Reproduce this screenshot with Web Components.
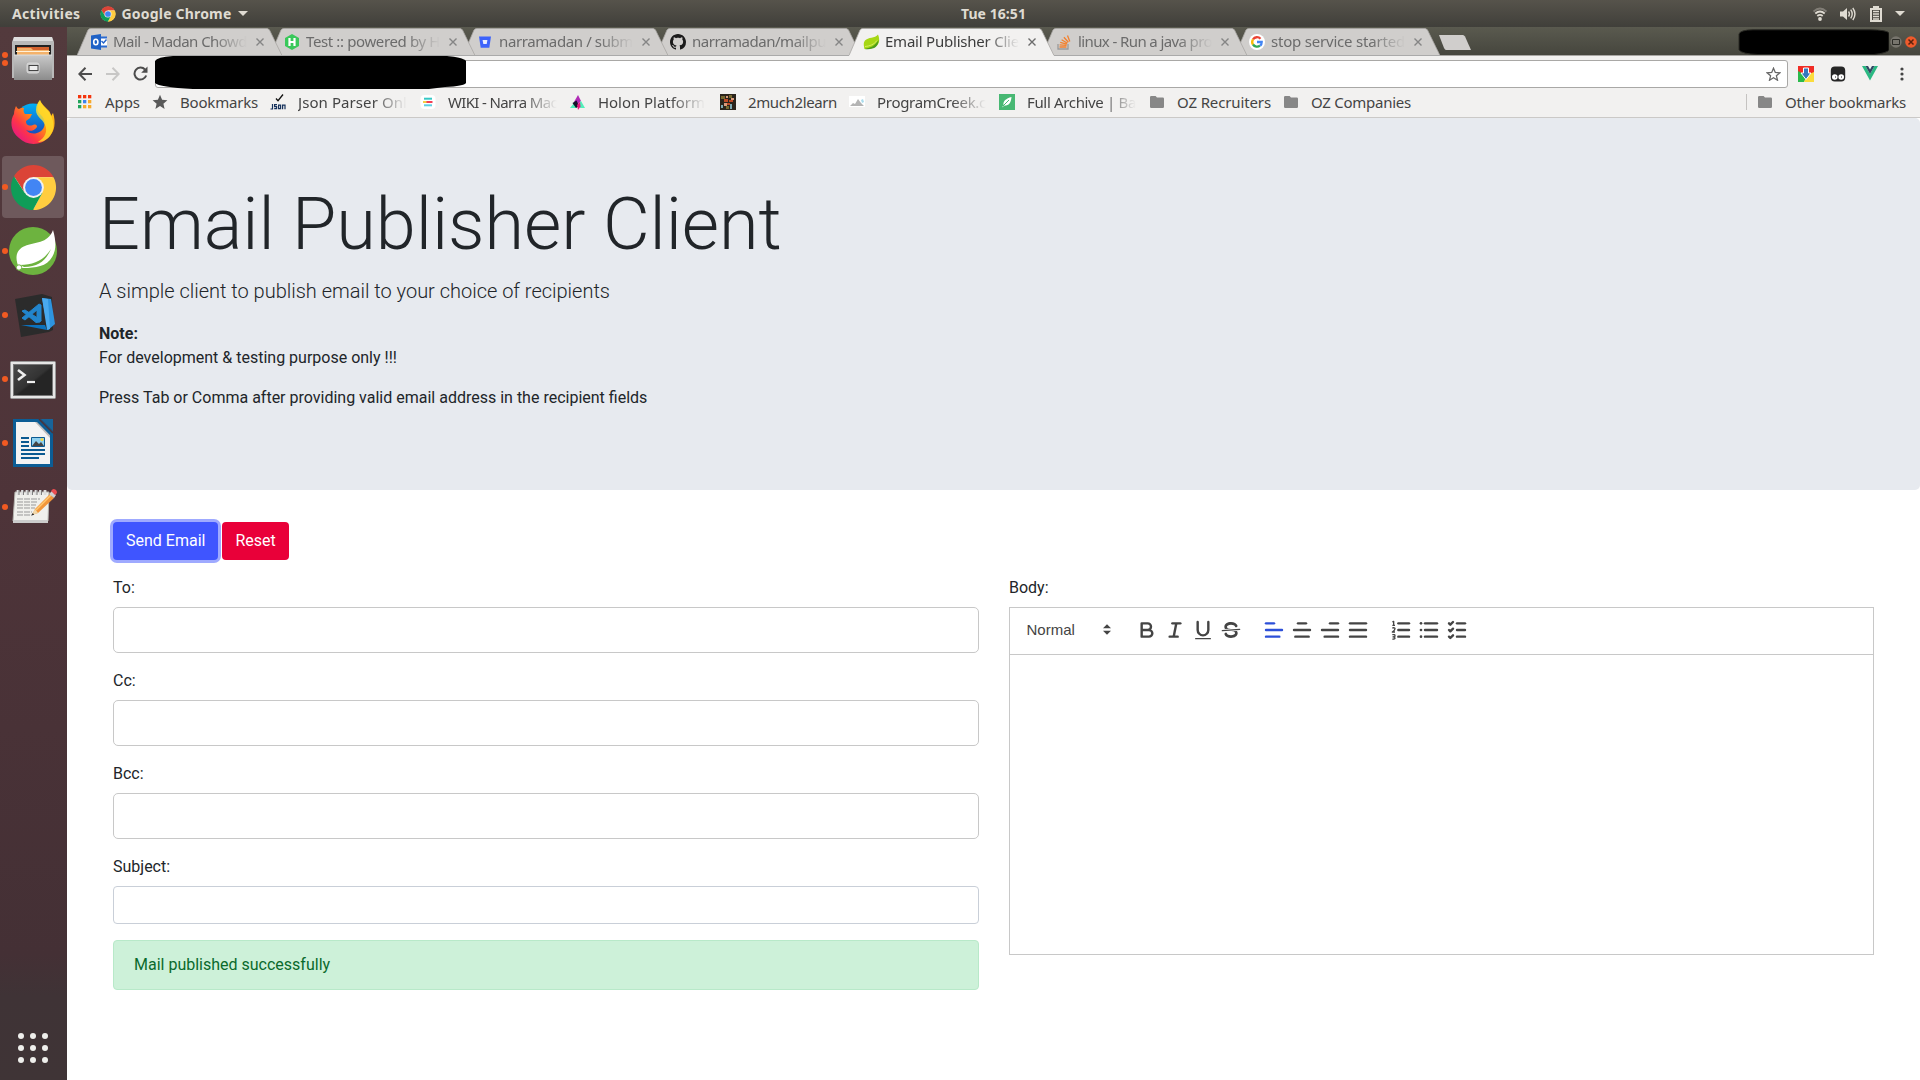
<!DOCTYPE html>
<html lang="en"><head><meta charset="utf-8"><title>Email Publisher Client</title>
<style>
html,body{margin:0;height:100%;overflow:hidden;background:#fff}
body{font-family:Roboto,"Noto Sans",sans-serif;font-size:16px;line-height:24px;color:#212529}
</style></head><body>
<desk-top></desk-top>
<script>
const def=(name,css,html,after)=>customElements.define(name,class extends HTMLElement{
  connectedCallback(){
    if(this.shadowRoot)return;
    const r=this.attachShadow({mode:'open'});
    r.innerHTML='<style>*{box-sizing:border-box}'+css+'</style>'+(typeof html==='function'?html(this):html);
    if(after)after(this,r);
  }
});
const svg=(w,h,vb,body)=>`<svg width="${w}" height="${h}" viewBox="${vb}" xmlns="http://www.w3.org/2000/svg" style="display:block;flex:none">${body}</svg>`;
const chrome=s=>svg(s,s,'-24 -24 48 48',`<circle r="22" fill="#fff"/><path d="M-19.9-11.5A23 23 0 0 1 19.9-11.5L20.500-10.500H0L-9.1 5.2Z" fill="#db4437"/><path d="M20.5-10.5A23 23 0 0 1-.5 23L9.1 5.2 0-10.5Z" fill="#ffcd40"/><path d="M-19.9-11.5-9.1 5.3 9.1 5.3-.5 23A23 23 0 0 1-19.9-11.5Z" fill="#0f9d58"/><circle r="10.6" fill="#f1f1f1"/><circle r="8.6" fill="#4285f4"/>`);
const fav={
outlook:svg(17,16,'0 0 17 16','<path d="M9 2.5h7v11H9z" fill="#2a6ad0"/><path d="M10 4.5h6v7h-6z" fill="#fff"/><path d="m10.5 7 2 2 3-3.5" stroke="#2262c8" fill="none" stroke-width="1.4"/><path d="M0 1.5 10 0v16L0 14.5z" fill="#1f62c6"/><ellipse cx="4.8" cy="8" rx="2.1" ry="2.8" fill="none" stroke="#fff" stroke-width="1.6"/>'),
hacker:svg(16,16,'0 0 16 16','<path d="M8 0 15 4v8l-7 4-7-4V4z" fill="#39c85a"/><path d="M5.500 4v8M10.500 4v8M5.500 8h5" stroke="#fff" stroke-width="2.200"/>'),
bucket:svg(16,16,'0 0 16 16','<path d="M2 2.5h12l-1.7 11.2H3.7z" fill="#3d63fb"/><path d="M5.6 6h4.8l-.7 4H6.3z" fill="#e9ecff"/>'),
github:svg(16,16,'0 0 16 16','<path fill="#1b1b1b" fill-rule="evenodd" d="M8 0C3.58 0 0 3.58 0 8c0 3.54 2.29 6.53 5.47 7.59.4.07.55-.17.55-.38 0-.19-.01-.82-.01-1.49-2.01.37-2.53-.49-2.69-.94-.09-.23-.48-.94-.82-1.13-.28-.15-.68-.52-.01-.53.63-.01 1.08.58 1.23.82.72 1.21 1.87.87 2.33.66.07-.52.28-.87.51-1.07-1.78-.2-3.64-.89-3.64-3.95 0-.87.31-1.59.82-2.15-.08-.2-.36-1.02.08-2.12 0 0 .67-.21 2.2.82.64-.18 1.32-.27 2-.27s1.36.09 2 .27c1.53-1.04 2.2-.82 2.2-.82.44 1.1.16 1.92.08 2.12.51.56.82 1.27.82 2.15 0 3.07-1.87 3.75-3.65 3.95.29.25.54.73.54 1.48 0 1.07-.01 1.93-.01 2.2 0 .21.15.46.55.38A8.01 8.01 0 0 0 16 8c0-4.42-3.58-8-8-8"/>'),
leaf:svg(17,16,'0 0 17 16','<path d="M15 .5c2 5 1.500 9-1.500 11.500-3 2.500-7 3-12 3C1 12 0 9 2 6.500 5 3 12 4.500 15 .5z" fill="#a6d714"/><path d="M1.500 15C7 14 12 12 15.500 6c0 7-5 10-14 9z" fill="#4e9d1b"/><path d="M2 12.500c5-.5 9-2 12-6" stroke="#d4ee62" fill="none"/>'),
stack:svg(16,16,'0 0 16 16','<path d="M2 10v5h10v-5" fill="none" stroke="#9a9a9a" stroke-width="1.300"/><path d="M3.500 13h7M3.600 10.800l7 .6M4.200 8.300l6.600 1.800M5.600 5.700l5.800 3.500M7.900 3.200l4.500 5M11.500 1.500l2.300 6" stroke="#f4802d" stroke-width="1.300"/>'),
google:svg(16,16,'0 0 16 16','<circle cx="8" cy="8" r="8" fill="#fff"/><g fill="none" stroke-width="2.300"><path d="M4 5.400A4.800 4.800 0 0 1 11.500 4.700" stroke="#ea4335"/><path d="M4 5.300a5 5 0 0 0 0 5.400" stroke="#fbbc05"/><path d="M4 10.500a4.800 4.800 0 0 0 7 1.100" stroke="#34a853"/><path d="M8 8h4.700c0 1.500-.5 2.800-1.500 3.800" stroke="#4285f4"/></g>'),
apps:svg(14,14,'0 0 14 14',['#f4340c','#f4340c','#f4340c','#21a45a','#3b82ee','#f7a92b','#21a45a','#f7a92b','#f7a92b'].map((c,i)=>`<path d="M${i%3*5} ${Math.floor(i/3)*5}h3.300v3.300h-3.300z" fill="${c}"/>`).join('')),
star:svg(16,16,'0 0 16 16','<path d="m8 .8 2.100 4.900 5.300.5-4 3.500 1.200 5.200L8 12.100l-4.600 2.800 1.200-5.200-4-3.500 5.300-.5z" fill="#595959"/>'),
json:svg(16,16,'0 0 16 16','<path d="m6 4.500 2 2.200L13 .5" fill="none" stroke="#111" stroke-width="1.300"/><g fill="none" stroke="#16325c" stroke-width="1.200"><path d="M2.500 10v5H.5M7 10.600H4.600v2h2v2H4.200"/><path d="M8.600 11.100h2v3.500h-2zM12.600 15.200v-4h2.400v4"/></g>'),
wiki:svg(16,16,'0 0 16 16','<rect x=".5" y="1" width="15" height="14" rx="4" fill="#fff"/><path d="M4 4.700h8" stroke="#36c8c5" stroke-width="2"/><path d="M3 8h4" stroke="#f4cf45" stroke-width="2"/><path d="M6.500 8h6" stroke="#f23f56" stroke-width="2"/><path d="M4 11.300h8" stroke="#5dcfe4" stroke-width="2"/>'),
holon:svg(16,16,'0 0 16 16','<path d="M4 8 8 1l3 6-3 3z" fill="#b02ab5"/><path d="M0 14 4 9l3 5zM10 8l1-1 4 7h-5z" fill="#52efbb"/><path d="m2.500 9 4-2.500L9 12l-3 2z" fill="#15152a"/><path d="m7 11 3-3 .5 4.500L8 16z" fill="#e8157c"/>'),
photo:svg(16,16,'0 0 16 16','<path d="M0 0h16v16H0z" fill="#2b241c"/><path d="M1 2h4v3H1zM9 1h3v3H9zM6 12h3v3H6z" fill="#76682f"/><path d="M4 5h4v3H4zM9 6h4v2H9zM7 9h3v2H7z" fill="#be4a26"/><path d="M11 4h3v2h-3zM4 9h3v3H4zM6 2h2v2H6z" fill="#d99b7c"/><path d="M10 10h2v5h-2zM1 11h2v3H1z" fill="#7da9b3"/>'),
creek:svg(16,16,'0 0 16 16','<path d="M0 2h16v11H0z" fill="#fff"/><path d="m1 12 3-3 2 1 3-5 3 4 3 3z" fill="#b4b4b4"/><path d="m12 6 2-1 1 3-2 1z" fill="#a9dced"/>'),
bael:svg(16,16,'0 0 16 16','<path d="M0 0h16v16H0z" fill="#48b873"/><path d="M12.500 3C12 9 10 11.500 5.500 11.500L3 13.500 4.500 11C4 7 7 4.500 12.500 3z" fill="#fff"/><path d="m4 12 6-6" stroke="#48b873"/>'),
folder:svg(14,12,'0 0 14 12','<path d="M1.200 0H5.600L7 1.600h5.800q1.200 0 1.200 1.200v8q0 1.200-1.200 1.200H1.200Q0 12 0 10.800V1.200Q0 0 1.200 0z" fill="#878787"/>')
};
/* A run of text spread to a fixed width, optionally faded at its end */
def('fit-text',`:host{display:block;flex:none;white-space:nowrap}span{display:inline-block}`,'<span><slot></slot></span>',(el,r)=>{
  const w=+el.getAttribute('w');el.style.width=w+'px';
  const n=el.textContent.length,s=r.querySelector('span');
  s.style.letterSpacing=((w-s.getBoundingClientRect().width)/n).toFixed(3)+'px';
  if(el.hasAttribute('fade'))el.style.maskImage='linear-gradient(90deg,#000 '+(w-34)+'px,transparent)';
});
def('top-bar',`:host{display:flex;height:27px;background:linear-gradient(#56534b,#403f3a);color:#dfdbd2;font:bold 14px/27px "Noto Sans",sans-serif;align-items:center;justify-content:space-between;padding:0 15px 0 12px}
div{display:flex;align-items:center;flex:1 1 0;min-width:0;height:27px}.r{justify-content:flex-end}`,
`<div><fit-text w="68.500">Activities</fit-text><span style="width:19px"></span>${chrome(16)}<span style="width:6px"></span><fit-text w="110">Google Chrome</fit-text><span style="width:6px"></span>${svg(10,5,'0 0 10 5','<path d="M0 0h10L5 5z" fill="#dfdbd2"/>')}</div>
<fit-text w="65" style="margin-left:70px">Tue 16:51</fit-text>
<div class="r">${svg(14,14,'0 0 14 14','<g fill="none" stroke="#dfdbd2" stroke-width="1.800"><path d="M.5 4.500q6.500-6 13 0" opacity=".35"/><path d="M2.300 6.500q4.700-4 9.400 0M4.300 9q2.700-2.300 5.400 0"/></g><circle cx="7" cy="12" r="1.900" fill="#dfdbd2"/>')}<span style="width:13px"></span>
${svg(16,14,'0 0 16 14','<path d="M0 4.500h3L7 1v12L3 9.500H0z" fill="#dfdbd2"/><path d="M8.500 4.500q1.800 2.500 0 5M10.700 2.700q3 4.300 0 8.600M12.800 1q4.300 6 0 12" fill="none" stroke="#dfdbd2" stroke-width="1.400"/>')}<span style="width:14px"></span>
${svg(12,16,'0 0 12 16','<path d="M3 0h6v2h3v14H0V2h3z" fill="#dfdbd2"/><path d="M2 4h8v10H2z" fill="#48463f"/><path d="M3 5.500h6M3 8h6M3 10.500h6M3 13h6" stroke="#dfdbd2" stroke-width="1.400"/>')}<span style="width:13px"></span>${svg(10,5,'0 0 10 5','<path d="M0 0h10L5 5z" fill="#dfdbd2"/>')}</div>`);
def('dock-item',`:host{display:flex;height:62px;margin:0 3px 2px 2px;border-radius:4px;align-items:center}
:host([active]){background:#6e595c}.d{width:6px;display:flex;flex-direction:column;gap:2.500px;flex:none}i{width:6px;height:6px;border-radius:50%;background:#f15a22}
.c{flex:1;display:flex;justify-content:center;padding-right:6px}`,el=>`<div class="d">${'<i></i>'.repeat(+el.getAttribute('dots'))}</div><div class="c"><slot></slot></div>`);
const ic={
files:svg(46,48,'0 0 46 48','<defs><linearGradient id="g" x2="0" y2="1"><stop stop-color="#c9c9c9"/><stop offset="1" stop-color="#8c8c8c"/></linearGradient></defs><path d="M4 2h38l2 5v36H2V7z" fill="#b9b9b9"/><path d="M4 2h38l1 4H3z" fill="#dedede"/><path d="M5 10h36v12H5z" fill="#222"/><path d="M7 12h32v8H7z" fill="#d3622e"/><path d="M7 13h14l2 2h16v5H7z" fill="#f4b26a"/><path d="M6 16.500h34" stroke="#fff1d9"/><path d="M4 20h38v25H4z" fill="url(#g)" /><path d="M4 20h38" stroke="#ddd"/><rect x="17" y="28" width="12" height="10" rx="2" fill="#c9c9c9" stroke="#d9d9d9"/><rect x="19" y="30.500" width="9" height="5" fill="#eee" stroke="#444"/>'),
firefox:svg(46,48,'0 0 46 48','<defs><linearGradient id="f" x1="1" y1="0" x2=".1" y2=".9"><stop stop-color="#ffe226"/><stop offset=".45" stop-color="#ff980e"/><stop offset=".75" stop-color="#ff3647"/><stop offset="1" stop-color="#e31587"/></linearGradient><linearGradient id="b" x2="0" y2="1"><stop stop-color="#00b1f5"/><stop offset="1" stop-color="#1d3fb4"/></linearGradient></defs><circle cx="23" cy="22" r="17.500" fill="url(#b)"/><path d="M6 7C7 9 8 10 9 10c3-2 5-1 5-1-1 3 0 5 1 6h7l-2 4-4 3c0 5 4 5 7 4 3-1 4 0 4 2-3 5-9 4-11 3 5 6 15 4 18-3 2-6-1-10-5-14-3-5-1-10 1-13 1 3 4 6 7 9 4 3 4 7 4 7l2-3c3 9 2 18-4 24-8 9-22 9-30 1C0 32 0 21 4 15 4 12 5 9 6 7z" fill="url(#f)"/><path d="M30 1c1 5 5 7 8 11 7 9 7 18 2 25-4 5-9 6-12 6 7-4 10-11 7-17-2-6-9-8-9-15 0-5 2-8 4-10z" fill="#ffdf2d" opacity=".8"/>'),
spring:svg(48,48,'0 0 48 48','<circle cx="24" cy="24" r="24" fill="#6db33f"/><path d="M44 3c4 14 3 23-3 30-7 8-19 8-31 8C6 32 6 23 16 19c9-4 23-2 28-16z" fill="#fff"/><path d="M11 38c14 0 24-5 31-16-5 11-12 18-27 18z" fill="#6db33f"/><circle cx="10" cy="40.500" r="2.700" fill="#fff" stroke="#6db33f"/>'),
code:svg(44,46,'0 0 44 46','<path d="M2 7 29 2l10 3 1 33-4 2-28 5z" fill="#2b2b2b"/><path d="m29 6 9 1 4 25-7 6z" fill="#2e94df"/><path d="m29 6 6 1 2 30-3 1z" fill="#49a9ee"/><path d="M8 33h24l2 5z" fill="#0c72bd"/><path d="m9 19 3-1 16 10-1 2-4 .5zM9 26l17-14 2 1v16l-4-1V18L12 28z" fill="#2285cc" stroke="#2285cc"/>'),
term:svg(46,38,'0 0 46 38','<defs><linearGradient id="t" x2="1" y2="1"><stop stop-color="#4a4a4a"/><stop offset=".5" stop-color="#333"/><stop offset=".55" stop-color="#252525"/></linearGradient></defs><rect x=".5" y=".5" width="45" height="37" rx="1" fill="#e6e6e6" stroke="#999"/><rect x="3.500" y="3.500" width="39" height="31" fill="url(#t)" stroke="#777"/><path d="m8 9 6.500 5L8 19" fill="none" stroke="#eee" stroke-width="2.600"/><path d="M17 21h8" stroke="#eee" stroke-width="2.200"/>'),
writer:svg(40,48,'0 0 40 48','<path d="M0 0h26l14 14v34H0z" fill="#0c5d95"/><path d="M3 3h20l14 14v28H3z" fill="#f3f3f3"/><path d="M24 3h-2l15 16v-3z" fill="#bcbcbc"/><path d="M22 0h6l12 12v7z" fill="#0c5d95"/><path d="M26 0 40 14" stroke="#4b333a" stroke-width="1.500"/><path d="M28 0h12v12z" fill="#17649a"/><path d="M8 19h8M8 23h8M8 27h8M8 31h24M8 35h24M8 39h18" stroke="#0b5a91" stroke-width="1.800"/><path d="M18.500 18.500h13v9h-13z" fill="#8fd0ee" stroke="#0b5a91"/><path d="m19 27 4-5 3 3 2-2 3 4z" fill="#444"/><circle cx="29" cy="20.500" r="1.500" fill="#f2d743"/>'),
edit:svg(46,40,'0 0 46 40','<path d="M3 6h34l-1 29H1z" fill="#f0f0ec" stroke="#b5b5b0"/><path d="M1 34h35v3H1z" fill="#ccc"/><path d="M6 4v5M10.500 4v5M15 4v5M19.500 4v5M24 4v5M28.500 4v5M33 4v5" stroke="#ddd" stroke-width="2.800"/><path d="M7 4v5M11.500 4v5M16 4v5M20.500 4v5M25 4v5M29.500 4v5" stroke="#666" stroke-width=".8"/><path d="M5 13h23M5 16h21M5 19h19M5 22h18M5 26h15M5 29h15" stroke="#999" stroke-dasharray="6 1"/><path d="m20 29 3-6 15-15 4 4-16 15z" fill="#f2963a"/><path d="m24 24 15-15" stroke="#ffc870" stroke-width="1.500"/><path d="m20 29 3-6 3 4z" fill="#f1d9ab"/><path d="m19.500 29.500 1.300-2.500 1.300 1.700z" fill="#222"/><path d="m37 8 3-3 4 4-2 3z" fill="#d0d0d0"/><path d="m39 5 2-2q4 0 4 4l-2 2z" fill="#ea4d50"/>')
};
def('app-dock',`:host{display:flex;flex-direction:column;width:67px;flex:none;background:linear-gradient(#533a3d,#4e3439 45%,#443035 88%,#3f3336 92%,#3f3436);padding-top:1px}
.apps{margin:auto 0 17px 18px;display:grid;grid-template-columns:repeat(3,6px);gap:6px}.apps i{height:6px;border-radius:50%;background:#efefec}`,
`<dock-item dots="2">${ic.files}</dock-item><dock-item dots="0">${ic.firefox}</dock-item><dock-item dots="1" active>${chrome(47)}</dock-item><dock-item dots="1">${ic.spring}</dock-item><dock-item dots="1"><span style="margin-left:4px">${ic.code}</span></dock-item><dock-item dots="1"><span style="padding-top:2px">${ic.term}</span></dock-item><dock-item dots="1">${ic.writer}</dock-item><dock-item dots="1"><span style="margin-left:4px;padding-bottom:3px">${ic.edit}</span></dock-item><div class="apps">${'<i></i>'.repeat(9)}</div>`);
def('browser-tab',`:host{display:grid;width:205px;height:28px;margin-right:-12px;flex:none;position:relative;color:#6b6b6b}:host([active]){z-index:20;color:#3c3c3c}
svg.bg,.c{grid-area:1/1}.c{display:flex;align-items:center;padding:0 0 1px 14px}.f{width:22px;flex:none}fit-text{padding-bottom:2px}`,
el=>`<svg class="bg" width="205" height="28"><path d="M0 27.500 11 2Q12 .5 13.500 .5H190Q191.500 .5 192.500 2L205 27.500" fill="${el.hasAttribute('active')?'#f2f1f0':'#d0cecc'}" stroke="#a9a7a4" stroke-width=".8"/>${el.hasAttribute('active')?'<path d="M0 28 .5 27H204.500L205 28z" fill="#f2f1f0"/>':'<path d="M0 27.500H205" stroke="#aaa"/>'}</svg><div class="c"><div class="f">${fav[el.getAttribute('icon')]}</div><fit-text fade w="134">${el.textContent}</fit-text><span style="flex:1"></span>${svg(8,8,'0 0 8 8',`<path d="m.5.5 7 7m0-7-7 7" stroke="${el.hasAttribute('active')?'#6c6c6c':'#858585'}" stroke-width="1.400"/>`)}<span style="width:18px"></span></div>`,
(el,r)=>{const i=[...el.parentNode.children].indexOf(el);if(!el.hasAttribute('active'))el.style.zIndex=10-i});
def('tab-strip',`:host{display:flex;height:29px;background:linear-gradient(#5a5a4f,#45453d);padding:1px 0 0 10px;font:15px/20px "Noto Sans",sans-serif;box-shadow:inset 0 -1px #a8a6a3}
.new{margin:7px 0 0 10px}.sp{flex:1}.win{display:flex;align-items:center;margin-right:3px}`,
`<browser-tab icon="outlook">Mail - Madan Chowd</browser-tab><browser-tab icon="hacker">Test :: powered by H</browser-tab><browser-tab icon="bucket">narramadan / subm</browser-tab><browser-tab icon="github">narramadan/mailpu</browser-tab><browser-tab icon="leaf" active>Email Publisher Clie</browser-tab><browser-tab icon="stack">linux - Run a java pro</browser-tab><browser-tab icon="google">stop service started</browser-tab>
<div class="new">${svg(33,15,'0 0 33 15','<path d="M1 0H25Q26 0 27 1.500L33 15H8Q7 15 6 13z" fill="#d0cecc"/>')}</div><div class="sp"></div>
<div class="win">${svg(151,26,'0 0 151 26','<path d="M1 5Q2 1 15 .8H132Q149 1 151 4V21Q149 24 136 25.500H20Q4 25 1 21z" fill="#000" stroke="#2a2a25"/>')}<span style="width:1px"></span>${svg(12,12,'0 0 12 12','<circle cx="6" cy="6" r="5.700" fill="#77756d"/><path d="M2.500 3.500h7v5h-7z" fill="none" stroke="#2c2c27"/>')}<span style="width:3px"></span>${svg(12,12,'0 0 12 12','<circle cx="6" cy="6" r="5.800" fill="#ee5a2b"/><path d="m3.500 3.500 5 5m0-5-5 5" stroke="#5c210d" stroke-width="1.500"/>')}</div>`);
def('address-bar',`:host{display:flex;height:35px;background:#f2f1f0;align-items:center;padding:0 16px 0 11px;position:relative}
.url{flex:1;height:28px;border:1px solid #a9a8a6;border-radius:3px;background:#fff;display:flex;align-items:center;justify-content:flex-end;padding-right:6px;margin:0 10px 0 7px}
.mask{position:absolute;left:88px;top:-1px}.ext{display:flex;align-items:center}`,
`${svg(14,14,'0 0 14 14','<path d="M14 7H1.500M7.500.8 1.300 7l6.200 6.200" fill="none" stroke="#4c4c4c" stroke-width="2"/>')}<span style="width:14px"></span>${svg(14,14,'0 0 14 14','<path d="M0 7h12.500M6.500.8 12.700 7l-6.200 6.200" fill="none" stroke="#c8c7c6" stroke-width="2"/>')}<span style="width:13px"></span>${svg(15,15,'0 0 15 15','<path d="M13.200 9.500A6 6 0 1 1 12 3.500" fill="none" stroke="#4c4c4c" stroke-width="2"/><path d="M14.500.5v6.300H8.200z" fill="#4c4c4c"/>')}
<div class="url">${svg(15,14,'0 0 15 14','<path d="m7.500 1.200 1.800 4.200 4.600.4-3.500 3 1.100 4.400-4-2.400-4 2.400 1.100-4.400-3.500-3 4.600-.4z" fill="none" stroke="#666" stroke-width="1.300"/>')}</div>
<div class="ext">${svg(16,16,'0 0 16 16','<path d="M0 0h16v8H0z" fill="#f02c25"/><path d="M0 5v11h6l3-6z" fill="#2aba4b"/><path d="M16 6v10H6l3-7z" fill="#fbdc3c"/><path d="M5.500 2h5v5H13l-5 6.500L3 7h2.500z" fill="#3478bd" stroke="#fff"/>')}<span style="width:16px"></span>${svg(16,16,'0 0 16 16','<rect x=".8" y=".5" width="14.400" height="15" rx="4" fill="#262626"/><circle cx="4.800" cy="11" r="2.800" fill="#fff"/><circle cx="11.200" cy="11" r="2.800" fill="#fff"/><path d="M5 11h1m5 0h1" stroke="#222"/>')}<span style="width:16px"></span>${svg(16,15,'0 0 16 15','<path d="M0 0h3.500L8 8l4.500-8H16L8 14.500z" fill="#2ab982"/><path d="M3.500 0H6l2 3.500L10 0h2.500L8 8z" fill="#304863"/>')}<span style="width:22px"></span>${svg(4,14,'0 0 4 14','<circle cx="2" cy="2" r="1.600" fill="#444"/><circle cx="2" cy="7" r="1.600" fill="#444"/><circle cx="2" cy="12" r="1.600" fill="#444"/>')}</div>
<div class="mask">${svg(311,34,'0 0 311 34','<path d="M0 6Q2 2 18 1L30 0H282Q309 2 311 6V28Q309 31 290 32L274 34H38Q4 32 0 28z"/>')}</div>`);
def('book-mark',`:host{display:flex;align-items:center;height:20px;flex:none}.i{width:28px;flex:none;display:flex;align-items:center;height:20px}fit-text{padding-bottom:1px}`,
el=>`<div class="i" style="width:${el.getAttribute('gap')}px">${fav[el.getAttribute('icon')]}</div><fit-text w="${el.getAttribute('w')}" ${el.hasAttribute('fade')?'fade':''}>${el.textContent}</fit-text>`);
def('bookmark-bar',`:host{display:flex;align-items:center;height:27px;background:#f2f1f0;border-bottom:1px solid #cbc9c7;padding:0 14px 4px 11px;font:15px/20px "Noto Sans",sans-serif;color:#444}
.sep{width:1px;height:16px;background:#c5c3c1;margin:0 11px 0 auto}`,
`<book-mark icon="apps" gap="27" w="35">Apps</book-mark><book-mark style="margin-left:12px" icon="star" gap="28" w="78">Bookmarks</book-mark><book-mark style="margin-left:12px" icon="json" gap="28" w="109" fade>Json Parser Onl</book-mark><book-mark style="margin-left:13px" icon="wiki" gap="28" w="109" fade>WIKI - Narra Mac</book-mark><book-mark style="margin-left:13px" icon="holon" gap="28" w="107" fade>Holon Platform</book-mark><book-mark style="margin-left:15px" icon="photo" gap="28" w="89">2much2learn</book-mark><book-mark style="margin-left:12px" icon="creek" gap="28" w="109" fade>ProgramCreek.c</book-mark><book-mark style="margin-left:13px" icon="bael" gap="28" w="109" fade>Full Archive | Ba</book-mark><book-mark style="margin-left:14px" icon="folder" gap="27" w="94">OZ Recruiters</book-mark><book-mark style="margin-left:13px" icon="folder" gap="27" w="100">OZ Companies</book-mark><div class="sep"></div><book-mark icon="folder" gap="27" w="121">Other bookmarks</book-mark>`);
def('jumbo-tron',`:host{display:block;background:#e7eaef;border-radius:5px;padding:64px 32px;height:372px;box-sizing:border-box}
h1{font-size:72px;font-weight:300;line-height:86.400px;margin:0 0 8px;letter-spacing:-.04px}.lead{font-size:20px;font-weight:300;line-height:30px;margin:0 0 16px;letter-spacing:-.01px}p{margin:0 0 16px}b{font-weight:700}`,
`<h1>Email Publisher Client</h1><p class="lead">A simple client to publish email to your choice of recipients</p><p><b>Note:</b><br>For development &amp; testing purpose only !!!</p><p>Press Tab or Comma after providing valid email address in the recipient fields</p>`);
def('ui-button',`:host{display:block}button{display:block;font:16px/24px Roboto,sans-serif;height:38px;padding:0 13px;border:0;border-radius:4px;color:#fff;background:#e90039}
:host([primary]) button{background:#3f55ff;box-shadow:0 0 0 3px #9faaff}`,'<button><slot></slot></button>');
def('form-field',`:host{display:block}label{display:block;height:24px;margin-bottom:7px}.box{height:46px;border:1px solid #c8c8c8;border-radius:5px;background:#fff}:host([plain]) .box{height:38px;border-color:#c9cfd8;border-radius:4px}`,
el=>`<label>${el.getAttribute('label')}</label><div class="box"></div>`);
const L=(...a)=>a.map(([x1,x2,y])=>`<path stroke-linecap="round" d="M${x1} ${y}H${x2}"/>`).join('');
const tools=[
['<path d="M5,4H9.500A2.500,2.500,0,0,1,9.500,9H5ZM5,9h5.500A2.500,2.500,0,0,1,10.500,14H5Z"/>',L([7,13,4],[5,11,14])+'<path d="M8 14 10 4"/>','<path stroke-linecap="round" d="M5,3V9a4,4,0,0,0,8,0V3"/><rect stroke="none" fill="#444" height="1" rx=".5" width="12" x="3" y="15"/>',
'<path stroke-width="1" stroke-linecap="round" d="M15.500 8.500 2.500 9.500"/><g fill="#444" stroke="none"><path d="M9.007,8C6.542,7.791,6,7.519,6,6.500,6,5.792,7.283,5,9,5c1.571,0,2.765.679,2.969,1.309a1,1,0,0,0,1.900-.617C13.356,4.106,11.354,3,9,3,6.200,3,4,4.538,4,6.500a3.200,3.200,0,0,0,.5,1.843Z"/><path d="M8.984,10C11.457,10.208,12,10.479,12,11.500c0,0.708-1.283,1.500-3,1.500-1.571,0-2.765-.679-2.969-1.309a1,1,0,1,0-1.900.617C4.644,13.894,6.646,15,9,15c2.800,0,5-1.538,5-3.500a3.200,3.200,0,0,0-.5-1.843Z"/></g>'],
['<g stroke="#2c4fd8">'+L([3,9,4],[3,15,9],[3,13,14])+'</g>',L([6,12,4],[3,15,9],[4,14,14]),L([9,15,4],[3,15,9],[5,15,14]),L([3,15,4],[3,15,9],[3,15,14])],
[L([7,15,4],[7,15,9],[7,15,14])+'<path stroke-width="1" d="M2.500 5.500h2M3.500 5.500V2.500L2.500 3M2.500 7.500q2-.5 2 .5T2.500 10.500h2M2.500 12.500q2-.3 2 .8t-1.500.8q1.500 0 1.500.9t-2 .8"/>',L([6,15,4],[6,15,9],[6,15,14])+'<g fill="#444" stroke="none"><circle cx="3" cy="4" r="1"/><circle cx="3" cy="9" r="1"/><circle cx="3" cy="14" r="1"/></g>',L([9,15,4],[9,15,9],[9,15,14])+'<path stroke-linecap="round" d="m3 4 1 1 2-2M3 9l1 1 2-2M3 14l1 1 2-2"/>']];
def('rich-editor',`:host{display:flex;flex-direction:column;height:348px;border:1px solid #c8c8c8}
.bar{height:47px;border-bottom:1px solid #c8c8c8;display:flex;align-items:center;padding:0 0 3px 16.500px;color:#444}
.pick{display:flex;width:88px;justify-content:space-between;align-items:center;font:15px/22px "Liberation Sans",sans-serif;padding-right:4px;margin-right:20.500px}
.g{display:flex;gap:4px;margin-right:19px}.doc{flex:1}`,
`<div class="bar"><div class="pick"><span>Normal</span>${svg(8,11,'6 5 6 8','<path d="m6 8 3-3 3 3zM6 10l3 3 3-3z" fill="#444"/>')}</div>${tools.map(g=>'<div class="g">'+g.map(b=>svg(24,24,'0 0 18 18',`<g fill="none" stroke="#444" stroke-width="1.800" stroke-linejoin="round">${b}</g>`)).join('')+'</div>').join('')}</div><div class="doc"></div>`);
def('alert-box',`:host{display:flex;align-items:center;height:50px;box-sizing:border-box;border:1px solid #b8e9c9;border-radius:4px;background:#cdf1d9;color:#0a6a2c;padding:0 20px}`,'<slot></slot>');
def('mail-form',`:host{display:block;padding:32px 45px 0 46px}.btns{display:flex;gap:4px}.cols{display:grid;grid-template-columns:866px 865px;gap:30px;margin-top:16px}.l{display:flex;flex-direction:column;gap:16px}.r label{display:block;height:24px;margin-bottom:7px}`,
`<div class="btns"><ui-button primary>Send Email</ui-button><ui-button>Reset</ui-button></div><div class="cols"><div class="l"><form-field label="To:"></form-field><form-field label="Cc:"></form-field><form-field label="Bcc:"></form-field><form-field plain label="Subject:"></form-field><alert-box>Mail published successfully</alert-box></div><div class="r"><label>Body:</label><rich-editor></rich-editor></div></div>`);
def('desk-top',`:host{display:flex;flex-direction:column;height:100vh}.m{display:flex;flex:1;min-height:0}.w{flex:1;min-width:0;background:#fff}`,
`<top-bar></top-bar><div class="m"><app-dock></app-dock><div class="w"><tab-strip></tab-strip><address-bar></address-bar><bookmark-bar></bookmark-bar><jumbo-tron></jumbo-tron><mail-form></mail-form></div></div>`);
</script></body></html>
